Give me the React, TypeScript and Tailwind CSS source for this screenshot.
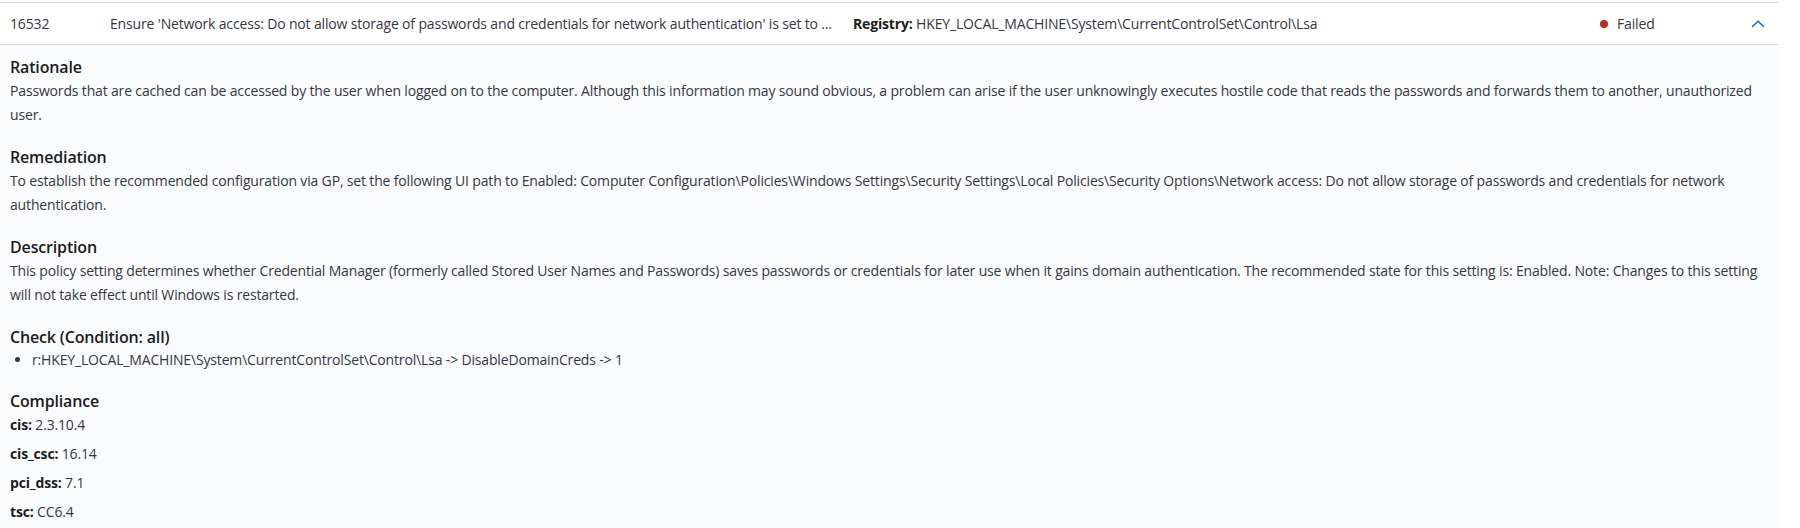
import { ReactNode } from "react";

const font = { fontFamily: '"Open Sans", "Noto Sans", sans-serif' };

function Section({ title, children }: { title: string; children: ReactNode }) {
  return (
    <section className="mb-[18px]">
      <h3 className="text-[16px] leading-[24px] font-semibold text-[#1a1c21]">{title}</h3>
      {children}
    </section>
  );
}

function ChevronUp() {
  return (
    <svg width="14" height="8" viewBox="0 0 14 8" fill="none">
      <polyline points="1,7 7,1.2 13,7" stroke="#006bb4" strokeWidth="1.3" />
    </svg>
  );
}

const compliance = [
  ["cis", "2.3.10.4"],
  ["cis_csc", "16.14"],
  ["pci_dss", "7.1"],
  ["tsc", "CC6.4"],
];

export default function App() {
  return (
    <div className="flex min-h-screen flex-col bg-white pt-[2px] tracking-[-0.16px]" style={font}>
      <div className="flex w-[1778px] flex-1 flex-col">
        {/* row header */}
        <div className="flex h-[43px] shrink-0 items-center border-y border-[#d3dae6] bg-white text-[14px] text-[#343741]">
          <div className="w-[100px] shrink-0 pl-[10px]">16532</div>
          <div className="w-[743px] shrink-0 overflow-hidden whitespace-nowrap pl-[10px]">
            Ensure 'Network access: Do not allow storage of passwords and credentials for network authentication' is set to ...
          </div>
          <div className="w-[747px] shrink-0 whitespace-nowrap pl-[10px]">
            <span className="font-bold text-[#1a1c21]">Registry:</span> HKEY_LOCAL_MACHINE\System\CurrentControlSet\Control\Lsa
          </div>
          <div className="flex flex-1 items-center gap-[9px] pl-[10px]">
            <span className="size-[8px] rounded-full bg-[#bd271e]" />
            <span>Failed</span>
          </div>
          <div className="flex w-[40px] shrink-0 justify-center">
            <ChevronUp />
          </div>
        </div>

        {/* expanded details */}
        <div className="flex-1 bg-[#fafbfd] px-[10px] pt-[10px] pb-[6px] text-[14px] leading-[24px] text-[#343741]">
          <Section title="Rationale">
            <p>
              Passwords that are cached can be accessed by the user when logged on to the computer. Although this information may sound obvious, a problem can arise if the user unknowingly executes hostile code that reads the passwords and forwards them to another, unauthorized user.
            </p>
          </Section>
          <Section title="Remediation">
            <p>
              To establish the recommended configuration via GP, set the following UI path to Enabled: Computer Configuration\Policies\Windows Settings\Security Settings\Local Policies\Security Options\Network access: Do not allow storage of passwords and credentials for network authentication.
            </p>
          </Section>
          <Section title="Description">
            <p>
              This policy setting determines whether Credential Manager (formerly called Stored User Names and Passwords) saves passwords or credentials for later use when it gains domain authentication. The recommended state for this setting is: Enabled. Note: Changes to this setting will not take effect until Windows is restarted.
            </p>
          </Section>
          <Section title="Check (Condition: all)">
            <ul className="list-disc pl-[22px] leading-[22px]">
              <li>r:HKEY_LOCAL_MACHINE\System\CurrentControlSet\Control\Lsa -&gt; DisableDomainCreds -&gt; 1</li>
            </ul>
          </Section>
          <h3 className="text-[16px] leading-[24px] font-semibold text-[#1a1c21]">Compliance</h3>
          <div className="flex flex-col gap-[5px]">
            {compliance.map(([k, v]) => (
              <p key={k}>
                <span className="font-bold text-[#1a1c21]">{k}:</span> {v}
              </p>
            ))}
          </div>
        </div>
      </div>
    </div>
  );
}
